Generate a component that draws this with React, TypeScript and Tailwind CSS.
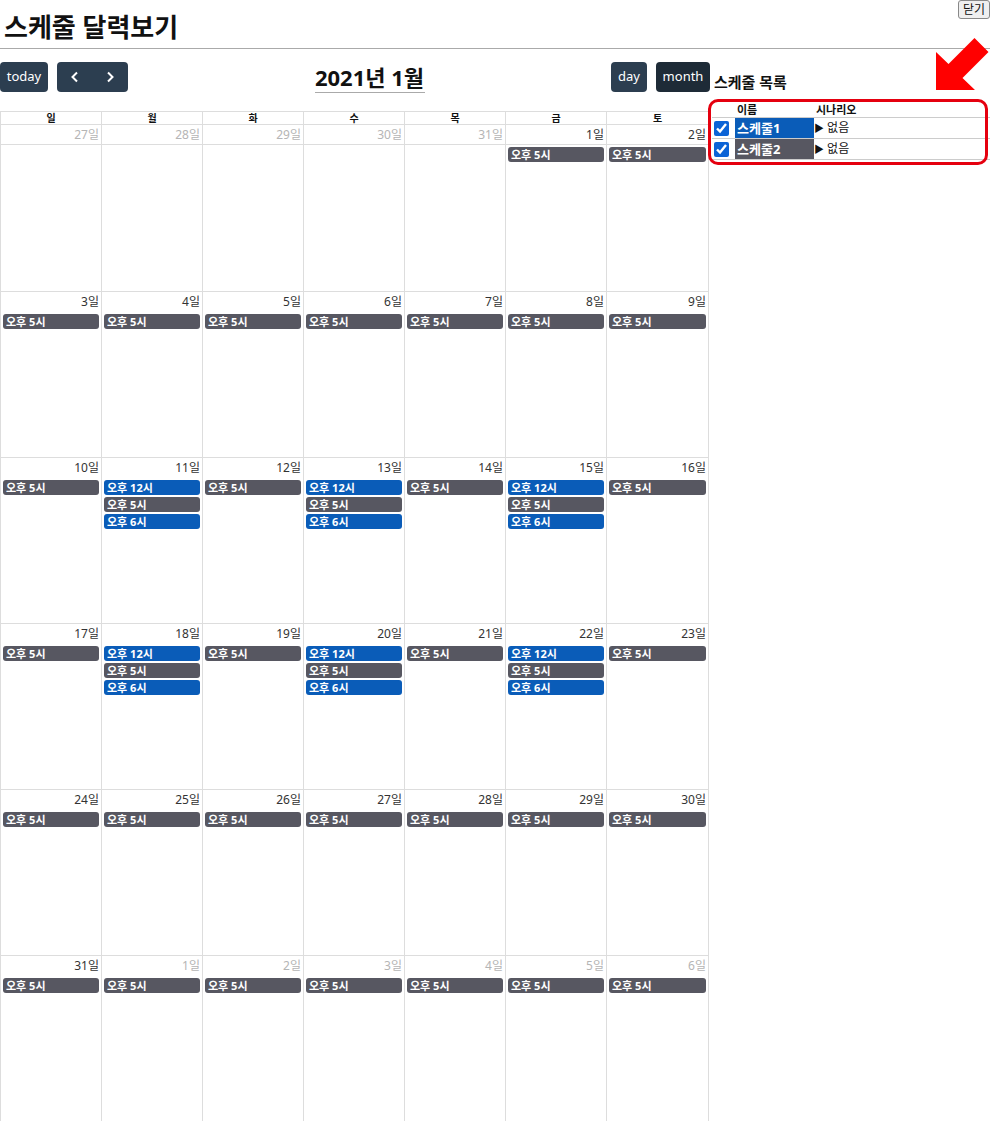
import React from 'react';

interface Day {
  n: number;
  other?: boolean;
  events: string[];
}

const G = '오후 5시';
const B12 = '오후 12시';
const B6 = '오후 6시';

const mk = (nums: number[], other: boolean[], pattern: string[][]): Day[] =>
  nums.map((n, i) => ({ n, other: other[i], events: pattern[i] }));

const allG = [[G], [G], [G], [G], [G], [G], [G]];
const mixed = [[G], [B12, G, B6], [G], [B12, G, B6], [G], [B12, G, B6], [G]];
const no = [false, false, false, false, false, false, false];

const weeks: Day[][] = [
  mk([27, 28, 29, 30, 31, 1, 2], [true, true, true, true, true, false, false], [[], [], [], [], [], [G], [G]]),
  mk([3, 4, 5, 6, 7, 8, 9], no, allG),
  mk([10, 11, 12, 13, 14, 15, 16], no, mixed),
  mk([17, 18, 19, 20, 21, 22, 23], no, mixed),
  mk([24, 25, 26, 27, 28, 29, 30], no, allG),
  mk([31, 1, 2, 3, 4, 5, 6], [false, true, true, true, true, true, true], allG),
];

const dayNames = ['일', '월', '화', '수', '목', '금', '토'];

const EventBar: React.FC<{ label: string }> = ({ label }) => {
  const blue = label !== G;
  return (
    <div
      className={`mx-[2px] h-[15px] rounded-[3px] px-[3px] text-[11px] font-bold leading-[15px] text-white ${
        blue ? 'bg-[#0a5cb8]' : 'bg-[#575761]'
      }`}
    >
      {label}
    </div>
  );
};

const Calendar: React.FC = () => (
  <div className="w-[710px] shrink-0">
    {/* toolbar */}
    <div className="flex h-[30px] items-center justify-between">
      <div className="flex gap-[9px]">
        <button className="h-[30px] w-[48px] rounded-[4px] bg-[#2c3e50] text-[13px] text-white">today</button>
        <div className="flex h-[30px] w-[71px] overflow-hidden rounded-[4px] bg-[#2c3e50] text-white">
          <button className="flex flex-1 items-center justify-center">
            <svg width="10" height="12" viewBox="0 0 10 12" fill="none" stroke="white" strokeWidth="2">
              <path d="M7 1.5 L2.5 6 L7 10.5" />
            </svg>
          </button>
          <button className="flex flex-1 items-center justify-center">
            <svg width="10" height="12" viewBox="0 0 10 12" fill="none" stroke="white" strokeWidth="2">
              <path d="M3 1.5 L7.5 6 L3 10.5" />
            </svg>
          </button>
        </div>
      </div>
      <h2 className="w-[110px] border-b border-[#aaa] text-center text-[22px] font-bold leading-[30px] text-[#111]">
        2021년 1월
      </h2>
      <div className="flex gap-[9px]">
        <button className="h-[30px] w-[36px] rounded-[4px] bg-[#2c3e50] text-[13px] text-white">day</button>
        <button className="h-[30px] w-[54px] rounded-[4px] bg-[#1e2b37] text-[13px] text-white">month</button>
      </div>
    </div>

    {/* grid */}
    <div className="mt-[19px] w-[709px] border-x border-[#ddd]">
      <div className="grid h-[14px] grid-cols-7 border-y border-[#ddd]">
        {dayNames.map((d, i) => (
          <div
            key={d}
            className={`text-center text-[10px] font-bold leading-[12px] text-[#111] ${i < 6 ? 'border-r border-[#ddd]' : ''}`}
          >
            {d}
          </div>
        ))}
      </div>
      {weeks.map((week, wi) => (
        <div key={wi} className={`grid h-[166px] grid-cols-7 ${wi > 0 ? 'border-t border-[#ddd]' : ''}`}>
          {week.map((day, di) => (
            <div key={di} className={`flex flex-col ${di < 6 ? 'border-r border-[#ddd]' : ''}`}>
              <div
                className={`h-[20px] pr-[2px] text-right text-[12px] leading-[20px] ${
                  day.other ? 'text-[#b5b5b5]' : 'text-[#333]'
                } ${wi === 0 ? 'border-b border-[#ddd]' : ''}`}
              >
                {day.n}일
              </div>
              <div className="mt-[2px] flex flex-col gap-[2px]">
                {day.events.map((e, ei) => (
                  <EventBar key={ei} label={e} />
                ))}
              </div>
            </div>
          ))}
        </div>
      ))}
    </div>
  </div>
);

const rows = [
  { name: '스케줄1', bg: 'bg-[#0a5cb8]' },
  { name: '스케줄2', bg: 'bg-[#575761]' },
];

const SidePanel: React.FC = () => (
  <div className="relative ml-[2px] w-[278px]">
    <h3 className="mt-[10px] pl-[2px] text-[15px] font-bold leading-[20px] text-[#111]">스케줄 목록</h3>
    <div className="mt-[11px] text-[#111]">
      <div className="flex h-[15px] items-center border-b border-[#ccc] text-[11px] font-bold">
        <div className="w-[23px]"></div>
        <div className="w-[79px] pl-[2px] leading-[14px]">이름</div>
        <div className="pl-[2px] leading-[14px]">시나리오</div>
      </div>
      {rows.map((r) => (
        <div key={r.name} className="flex h-[21px] border-b border-[#ccc]">
          <div className="flex w-[23px] items-center pl-[2px]">
            <input type="checkbox" checked readOnly className="block h-[15px] w-[15px] accent-[#0b63d6]" />
          </div>
          <div className={`${r.bg} w-[79px] pl-[2px] text-[13px] font-bold leading-[20px] text-white`}>{r.name}</div>
          <div className="text-[12px] leading-[20px]">
            <span className="text-[10px]">▶</span> 없음
          </div>
        </div>
      ))}
    </div>
    {/* red highlight */}
    <div className="pointer-events-none absolute left-[-4px] top-[37px] h-[66px] w-[280px] rounded-[10px] border-[3px] border-[#e5000f]"></div>
  </div>
);

export default function App() {
  return (
    <div
      className="relative min-h-[1125px] w-[994px] overflow-hidden bg-white"
      style={{ fontFamily: '"Noto Sans", "Noto Sans CJK KR", sans-serif' }}
    >
      <div className="flex h-[49px] w-[990px] justify-between border-b border-[#aaa]">
        <h1 className="self-end pb-[4px] pl-[4px] text-[26px] font-bold leading-[34px] text-[#111]">
          스케줄 달력보기
        </h1>
        <button className="h-[19px] self-start rounded-[3px] border border-[#888] bg-[#efefef] px-[4px] text-[12px] leading-[16px] text-[#111]">
          닫기
        </button>
      </div>

      <div className="mt-[13px] flex">
        <Calendar />
        <SidePanel />
      </div>

      {/* red arrow annotation */}
      <svg className="absolute left-[930px] top-[30px]" width="64" height="64" viewBox="0 0 64 64">
        <polygon points="6,60 6,22 18.5,34 44.5,8 58.5,22 32.5,48 45,60" fill="#f00" />
      </svg>
    </div>
  );
}
